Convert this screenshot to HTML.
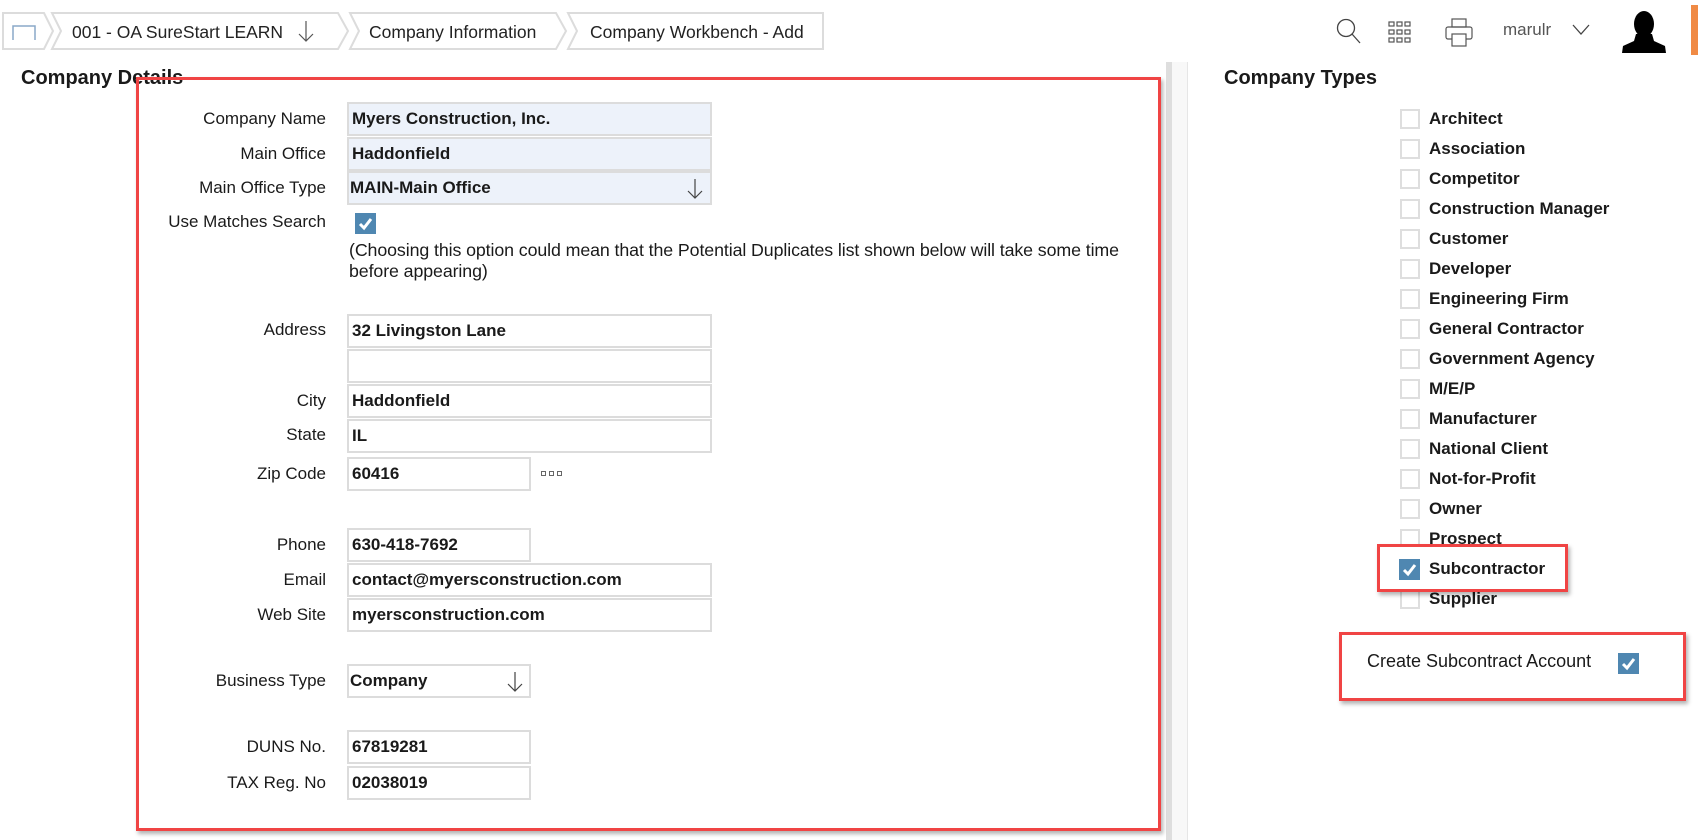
<!DOCTYPE html>
<html><head><meta charset="utf-8"><style>
*{margin:0;padding:0;box-sizing:border-box}
body{width:1698px;height:840px;background:#fff;font-family:"Liberation Sans",sans-serif;color:#1a1a1a;position:relative;overflow:hidden}
.a{position:absolute}
.lbl{position:absolute;right:1372px;font-size:17px;text-align:right;white-space:nowrap;line-height:20px}
.in{position:absolute;left:347px;width:365px;height:34px;border:2px solid #dcdcdc;background:#fff;font-size:17px;font-weight:bold;padding-left:3px;line-height:30px;white-space:nowrap}
.sh{width:184px}
.bl{background:#edf2fa}
.cb{position:absolute;left:1400px;width:20px;height:20px;border:2px solid #dedede;background:#fff}
.ct{position:absolute;left:1429px;font-size:17px;font-weight:bold;line-height:20px;white-space:nowrap}
.chk{position:absolute;width:21px;height:21px;background:#4f87b1}
.red{position:absolute;border:3px solid #f04444;box-shadow:2px 3px 4px rgba(0,0,0,.3)}
.bc{position:absolute;top:22px;font-size:17.5px;color:#222;white-space:nowrap}
</style></head><body>

<svg class="a" style="left:0;top:0" width="840" height="60">
<g fill="#fff" stroke="#dcdcdc" stroke-width="2">
<polygon points="3,13 44,13 53,31 44,49 3,49"/>
<polygon points="52,13 338,13 348,31 338,49 52,49 61,31"/>
<polygon points="350,13 556,13 566,31 556,49 350,49 359,31"/>
<polygon points="568,13 823,13 823,49 568,49 577,31"/>
</g>
<path d="M13,40 V26 H35 V40" fill="none" stroke="#8aa9c8" stroke-width="1.5"/>
<path d="M306,21 V41 M299,34 L306,41 L313,34" fill="none" stroke="#555" stroke-width="1.2"/>
</svg>
<div class="bc" style="left:72px">001 - OA SureStart LEARN</div>
<div class="bc" style="left:369px">Company Information</div>
<div class="bc" style="left:590px">Company Workbench - Add</div>

<svg class="a" style="left:1330px;top:8px" width="150" height="45">
<circle cx="16" cy="20" r="8.5" fill="none" stroke="#444" stroke-width="1.3"/>
<path d="M22,26 L30,35" stroke="#444" stroke-width="1.3"/>
<g fill="none" stroke="#555" stroke-width="1.2">
<rect x="59" y="14" width="5" height="4"/><rect x="67" y="14" width="5" height="4"/><rect x="75" y="14" width="5" height="4"/>
<rect x="59" y="22" width="5" height="4"/><rect x="67" y="22" width="5" height="4"/><rect x="75" y="22" width="5" height="4"/>
<rect x="59" y="30" width="5" height="4"/><rect x="67" y="30" width="5" height="4"/><rect x="75" y="30" width="5" height="4"/>
<rect x="122" y="11" width="14" height="8"/>
<rect x="116" y="19" width="26" height="12" rx="2"/>
<rect x="122" y="26" width="14" height="12" fill="#fff"/>
</g>
</svg>
<div class="a" style="left:1503px;top:20px;font-size:17px;color:#555">marulr</div>
<svg class="a" style="left:1570px;top:20px" width="24" height="18"><path d="M3,5 L11,14 L19,5" fill="none" stroke="#444" stroke-width="1.3"/></svg>
<svg class="a" style="left:1620px;top:8px" width="48" height="48">
<ellipse cx="24" cy="16" rx="10" ry="13" fill="#000"/>
<path d="M16,26 L32,26 L34,33 L45,38 L46,45 L2,45 L3,38 L14,33Z" fill="#000"/>
</svg>
<div class="a" style="left:1691px;top:5px;width:7px;height:50px;background:#f08a45"></div>

<div class="a" style="left:21px;top:67px;font-size:20px;font-weight:bold">Company Details</div>

<div class="a" style="left:1166px;top:62px;width:6px;height:778px;background:#dedede"></div>
<div class="a" style="left:1172px;top:62px;width:16px;height:778px;background:#f8f8f8;border-right:1px solid #e6e6e6"></div>

<div class="red" style="left:136px;top:77px;width:1025px;height:754px"></div>

<div class="lbl" style="top:109px">Company Name</div><div class="in bl" style="top:102px">Myers Construction, Inc.</div>
<div class="lbl" style="top:144px">Main Office</div><div class="in bl" style="top:137px">Haddonfield</div>
<div class="lbl" style="top:178px">Main Office Type</div><div class="in bl" style="top:171px;padding-left:1px">MAIN-Main Office</div>
<svg class="a" style="left:685px;top:177px" width="20" height="24"><path d="M10,2 V21 M3,14 L10,21 L17,14" fill="none" stroke="#444" stroke-width="1.2"/></svg>
<div class="lbl" style="top:212px">Use Matches Search</div>
<div class="chk" style="left:355px;top:213px"></div>
<svg class="a" style="left:355px;top:213px" width="21" height="21"><path d="M5,11 L9,15 L16,6" fill="none" stroke="#fff" stroke-width="3"/></svg>
<div class="a" style="left:349px;top:240px;font-size:17.8px;line-height:21px;width:820px;letter-spacing:-0.1px">(Choosing this option could mean that the Potential Duplicates list shown below will take some time<br>before appearing)</div>

<div class="lbl" style="top:320px">Address</div><div class="in" style="top:314px">32 Livingston Lane</div>
<div class="in" style="top:349px"></div>
<div class="lbl" style="top:391px">City</div><div class="in" style="top:384px">Haddonfield</div>
<div class="lbl" style="top:425px">State</div><div class="in" style="top:419px">IL</div>
<div class="lbl" style="top:464px">Zip Code</div><div class="in sh" style="top:457px">60416</div>
<svg class="a" style="left:540px;top:470px" width="24" height="8"><g fill="none" stroke="#666" stroke-width="1"><rect x="1.5" y="1.5" width="4" height="4"/><rect x="9.5" y="1.5" width="4" height="4"/><rect x="17.5" y="1.5" width="4" height="4"/></g></svg>
<div class="lbl" style="top:535px">Phone</div><div class="in sh" style="top:528px">630-418-7692</div>
<div class="lbl" style="top:570px">Email</div><div class="in" style="top:563px">contact@myersconstruction.com</div>
<div class="lbl" style="top:605px">Web Site</div><div class="in" style="top:598px">myersconstruction.com</div>
<div class="lbl" style="top:671px">Business Type</div><div class="in sh" style="top:664px;padding-left:1px">Company</div>
<svg class="a" style="left:505px;top:670px" width="20" height="24"><path d="M10,2 V21 M3,14 L10,21 L17,14" fill="none" stroke="#444" stroke-width="1.2"/></svg>
<div class="lbl" style="top:737px">DUNS No.</div><div class="in sh" style="top:730px">67819281</div>
<div class="lbl" style="top:773px">TAX Reg. No</div><div class="in sh" style="top:766px">02038019</div>

<div class="a" style="left:1224px;top:67px;font-size:20px;font-weight:bold">Company Types</div>

<div class="cb" style="top:109px"></div><div class="ct" style="top:109px">Architect</div>
<div class="cb" style="top:139px"></div><div class="ct" style="top:139px">Association</div>
<div class="cb" style="top:169px"></div><div class="ct" style="top:169px">Competitor</div>
<div class="cb" style="top:199px"></div><div class="ct" style="top:199px">Construction Manager</div>
<div class="cb" style="top:229px"></div><div class="ct" style="top:229px">Customer</div>
<div class="cb" style="top:259px"></div><div class="ct" style="top:259px">Developer</div>
<div class="cb" style="top:289px"></div><div class="ct" style="top:289px">Engineering Firm</div>
<div class="cb" style="top:319px"></div><div class="ct" style="top:319px">General Contractor</div>
<div class="cb" style="top:349px"></div><div class="ct" style="top:349px">Government Agency</div>
<div class="cb" style="top:379px"></div><div class="ct" style="top:379px">M/E/P</div>
<div class="cb" style="top:409px"></div><div class="ct" style="top:409px">Manufacturer</div>
<div class="cb" style="top:439px"></div><div class="ct" style="top:439px">National Client</div>
<div class="cb" style="top:469px"></div><div class="ct" style="top:469px">Not-for-Profit</div>
<div class="cb" style="top:499px"></div><div class="ct" style="top:499px">Owner</div>
<div class="cb" style="top:529px"></div><div class="ct" style="top:529px">Prospect</div>
<div class="cb" style="top:589px"></div><div class="ct" style="top:589px">Supplier</div>
<div class="red" style="left:1377px;top:544px;width:191px;height:48px;background:#fff"></div>
<div class="chk" style="left:1399px;top:559px"></div>
<svg class="a" style="left:1399px;top:559px" width="21" height="21"><path d="M5,11 L9,15 L16,6" fill="none" stroke="#fff" stroke-width="3"/></svg>
<div class="ct" style="top:559px">Subcontractor</div>

<div class="red" style="left:1339px;top:632px;width:347px;height:69px"></div>
<div class="a" style="left:1367px;top:651px;font-size:18px;white-space:nowrap">Create Subcontract Account</div>
<div class="chk" style="left:1618px;top:653px"></div>
<svg class="a" style="left:1618px;top:653px" width="21" height="21"><path d="M5,11 L9,15 L16,6" fill="none" stroke="#fff" stroke-width="3"/></svg>

</body></html>
